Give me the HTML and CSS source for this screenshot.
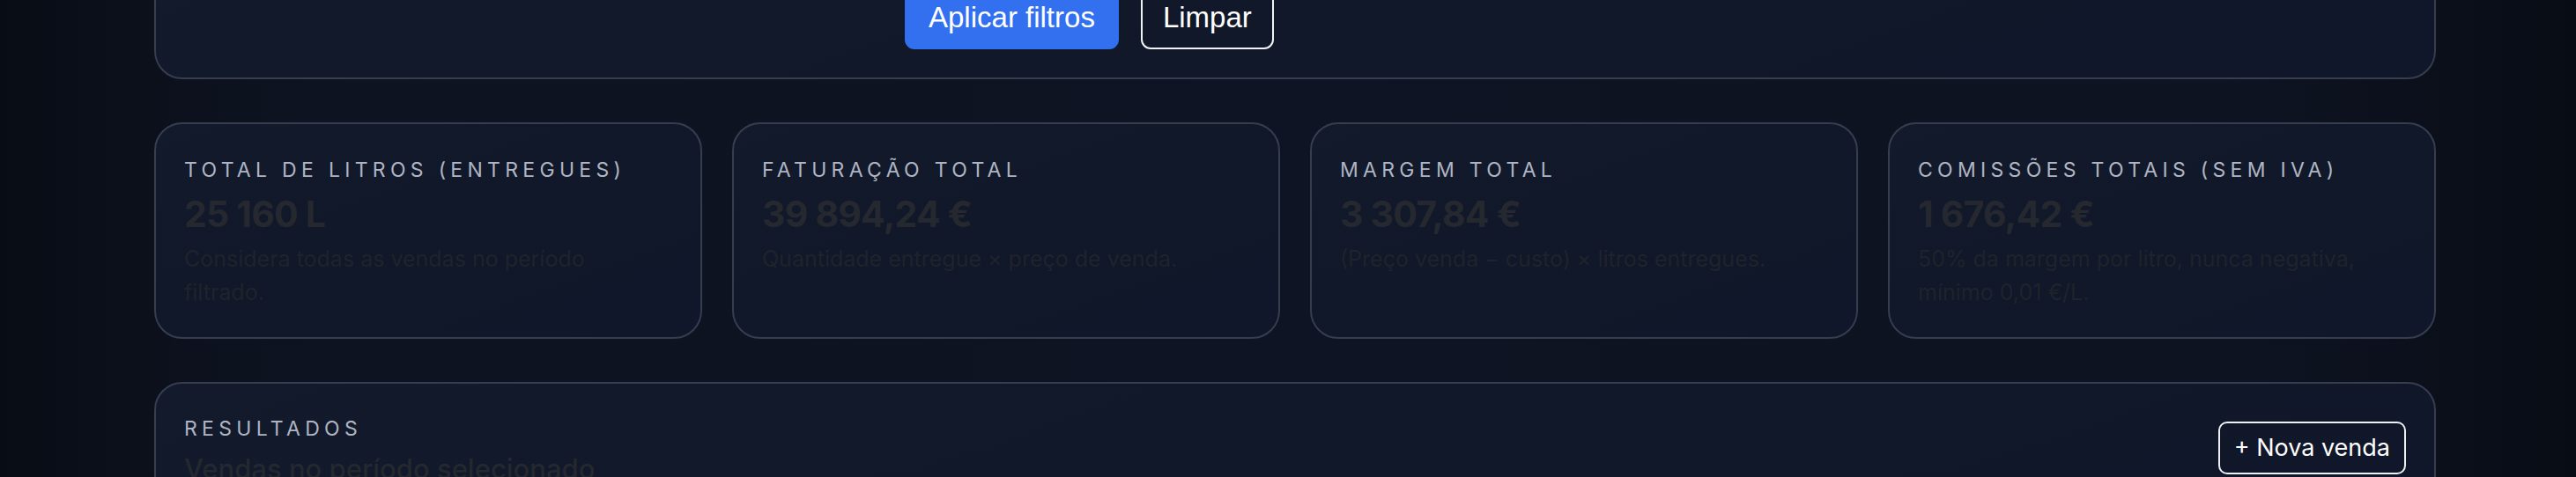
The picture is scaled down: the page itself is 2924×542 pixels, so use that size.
FILE: index.html
```html
<!DOCTYPE html>
<html lang="pt">
<head>
<meta charset="utf-8">
<title>Vendas</title>
<link rel="stylesheet" href="styles.css">
</head>
<body>
<main class="page">
  <section class="card filter-card">
    <div class="filter-grid">
      <div class="filter-spacer"></div>
      <div class="filter-actions">
        <button class="btn btn-primary" type="button">Aplicar filtros</button>
        <button class="btn btn-outline" type="button">Limpar</button>
      </div>
    </div>
  </section>

  <section class="stats">
    <article class="card stat">
      <div class="label">Total de litros (entregues)</div>
      <div class="value">25&nbsp;160 L</div>
      <p class="desc">Considera todas as vendas no período filtrado.</p>
    </article>
    <article class="card stat">
      <div class="label">Faturação total</div>
      <div class="value">39&nbsp;894,24 €</div>
      <p class="desc">Quantidade entregue × preço de venda.</p>
    </article>
    <article class="card stat">
      <div class="label">Margem total</div>
      <div class="value">3&nbsp;307,84 €</div>
      <p class="desc">(Preço venda − custo) × litros entregues.</p>
    </article>
    <article class="card stat">
      <div class="label">Comissões totais (sem IVA)</div>
      <div class="value">1&nbsp;676,42 €</div>
      <p class="desc">50% da margem por litro, nunca negativa, mínimo 0,01 €/L.</p>
    </article>
  </section>

  <section class="card results">
    <header class="results-head">
      <div>
        <div class="label">Resultados</div>
        <h2 class="results-title">Vendas no período selecionado</h2>
      </div>
      <button class="btn-new" type="button">+ Nova venda</button>
    </header>
  </section>
</main>
</body>
</html>
```

FILE: styles.css
```css
* { box-sizing: border-box; }

html, body {
  margin: 0;
  padding: 0;
}

body {
  min-height: 100vh;
  font-family: Inter, "Noto Sans", sans-serif;
  color: #e5e7eb;
  background:
    linear-gradient(90deg, #080c15 0%, #0b101b 5%, #0e1321 12%, #0f1424 50%, #0e1321 88%, #0b0f1a 95%, #080c15 100%);
  overflow: hidden;
}

.page {
  padding: 0 159px 40px 175px;
  margin-top: -50px;
  display: flex;
  flex-direction: column;
  gap: 49px;
}

.card {
  background: linear-gradient(160deg, #121a2c 0%, #111829 40%, #10172a 100%);
  border: 2px solid #363d4f;
  border-radius: 32px;
}

.filter-card {
  padding: 32px 32px 32px;
}

.filter-grid {
  display: grid;
  grid-template-columns: 786px auto;
  column-gap: 32px;
}

.filter-actions {
  display: flex;
  gap: 25px;
  align-items: flex-end;
}

.btn {
  font-family: "Liberation Sans", Arial, sans-serif;
  font-size: 33px;
  line-height: 38px;
  padding: 15px 25px;
  border-radius: 11px;
  border: 2px solid transparent;
  color: #ffffff;
  cursor: pointer;
}

.btn-primary {
  background: #3370f0;
  border-color: #3370f0;
}

.btn-outline {
  background: transparent;
  border-color: #f1f2f4;
  padding: 15px 23px;
}

.stats {
  display: grid;
  grid-template-columns: repeat(4, 1fr);
  gap: 34px;
}

.stat {
  padding: 38px 32px 32px;
}

.label {
  font-size: 23px;
  line-height: 28px;
  letter-spacing: 5.3px;
  text-transform: uppercase;
  color: #afb5c2;
  white-space: nowrap;
}

.value {
  margin-top: 12px;
  font-size: 41px;
  line-height: 48px;
  font-weight: 700;
  letter-spacing: -0.8px;
  color: #25282f;
}

.desc {
  margin: 8px 0 0;
  padding-right: 14px;
  font-size: 25px;
  line-height: 38px;
  color: #1f232b;
}

.results {
  padding: 37px 32px 32px;
  min-height: 200px;
}

.results-head {
  display: flex;
  justify-content: space-between;
  align-items: flex-start;
}

.results-title {
  margin: 12px 0 0;
  font-size: 31px;
  line-height: 40px;
  font-weight: 500;
  color: #25282f;
}

.btn-new {
  margin-top: 6px;
  font-family: Inter, "Noto Sans", sans-serif;
  font-size: 27px;
  line-height: 34px;
  padding: 11px 16px;
  border: 2px solid #eef0f3;
  border-radius: 10px;
  background: transparent;
  color: #ffffff;
  cursor: pointer;
}
```
